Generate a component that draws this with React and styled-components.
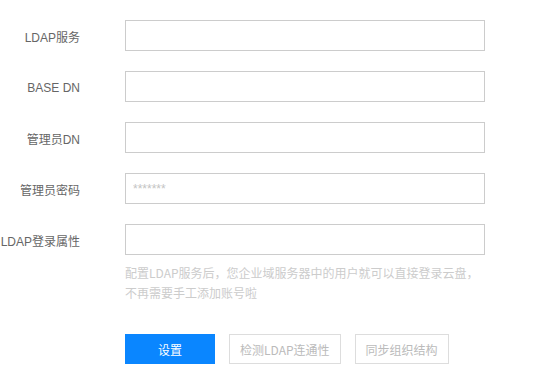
import React from "react";
import styled, { createGlobalStyle } from "styled-components";

const fields = [
	{ label: "LDAP服务" },
	{ label: "BASE DN" },
	{ label: "管理员DN" },
	{ label: "管理员密码", type: "password", placeholder: "*******" },
	{ label: "LDAP登录属性" },
];

export default function App() {
	return (
		<>
			<GlobalStyle />
			<Form>
				{fields.map(({ label, type, placeholder }) => (
					<Row key={label}>
						<Label>{label}</Label>
						<Input type={type || "text"} placeholder={placeholder} />
					</Row>
				))}

				<Hint>配置LDAP服务后，您企业域服务器中的用户就可以直接登录云盘，不再需要手工添加账号啦</Hint>

				<Actions>
					<Button primary>设置</Button>
					<Button>检测LDAP连通性</Button>
					<Button>同步组织结构</Button>
				</Actions>
			</Form>
		</>
	);
}

const GlobalStyle = createGlobalStyle`
	body {
		margin: 0;
		background: #ffffff;
		font-family: "Liberation Sans", "Noto Sans CJK SC", sans-serif;
	}
`;

const Form = styled.div`
	padding-top: 20px;
`;

const Row = styled.div`
	display: flex;
	align-items: center;
	margin-bottom: 20px;
`;

const Label = styled.label`
	width: 80px;
	margin-right: 45px;
	padding-top: 2px;
	text-align: right;
	font-size: 12px;
	color: #666666;
	white-space: nowrap;
`;

const Input = styled.input`
	box-sizing: border-box;
	width: 360px;
	height: 31px;
	padding: 0 7px;
	border: 1px solid #cccccc;
	outline: none;
	font-size: 12px;
	color: #333333;

	&::placeholder {
		color: #c4c4c4;
	}
`;

const Hint = styled.p`
	width: 360px;
	margin: -12px 0 0 125px;
	font-size: 12px;
	line-height: 20px;
	color: #cccccc;
	font-family: "Noto Sans CJK SC", sans-serif;
`;

const Actions = styled.div`
	display: flex;
	gap: 14px;
	margin: 31px 0 0 125px;
`;

const Button = styled.button`
	box-sizing: border-box;
	height: 30px;
	min-width: 90px;
	padding: 0 10px;
	font-size: 12px;
	font-family: "Noto Sans CJK SC", sans-serif;
	border: 1px solid ${({ primary }) => (primary ? "#0a86ff" : "#dddddd")};
	background: ${({ primary }) => (primary ? "#0a86ff" : "#ffffff")};
	color: ${({ primary }) => (primary ? "#ffffff" : "#bbbbbb")};
	cursor: pointer;
`;
